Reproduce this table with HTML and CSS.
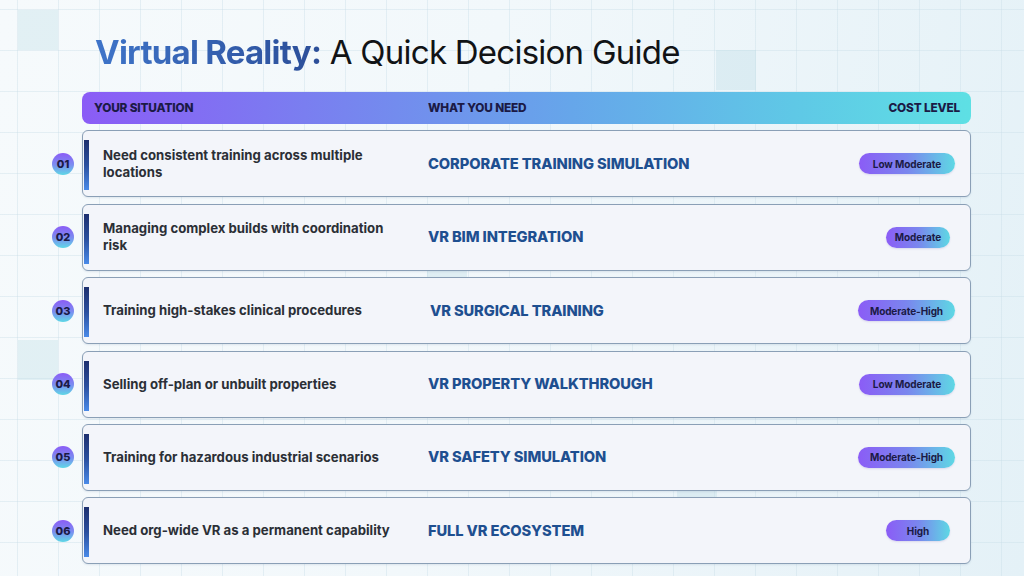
FILE: index.html
```html
<!DOCTYPE html>
<html lang="en">
<head>
<meta charset="utf-8">
<title>Virtual Reality: A Quick Decision Guide</title>
<link rel="stylesheet" href="styles.css">
</head>
<body>
<div class="page">
  <div class="deco d1"></div>
  <div class="deco d2"></div>
  <div class="deco d3"></div>
  <div class="deco d4"></div>
  <div class="deco d5"></div>

  <h1 class="title"><span class="accent">Virtual Reality:</span> A Quick Decision Guide</h1>

  <div class="table">
    <div class="head">
      <span class="h-sit">YOUR SITUATION</span>
      <span class="h-need">WHAT YOU NEED</span>
      <span class="h-cost">COST LEVEL</span>
    </div>

    <div class="line">
      <div class="num">01</div>
      <div class="card">
        <div class="bar"></div>
        <div class="sit">Need consistent training across multiple locations</div>
        <div class="need">CORPORATE TRAINING SIMULATION</div>
        <div class="cost"><span class="badge">Low Moderate</span></div>
      </div>
    </div>

    <div class="line">
      <div class="num">02</div>
      <div class="card">
        <div class="bar"></div>
        <div class="sit">Managing complex builds with coordination risk</div>
        <div class="need">VR BIM INTEGRATION</div>
        <div class="cost"><span class="badge narrow">Moderate</span></div>
      </div>
    </div>

    <div class="line">
      <div class="num">03</div>
      <div class="card">
        <div class="bar"></div>
        <div class="sit">Training high-stakes clinical procedures</div>
        <div class="need shift">VR SURGICAL TRAINING</div>
        <div class="cost"><span class="badge">Moderate-High</span></div>
      </div>
    </div>

    <div class="line">
      <div class="num">04</div>
      <div class="card">
        <div class="bar"></div>
        <div class="sit">Selling off-plan or unbuilt properties</div>
        <div class="need">VR PROPERTY WALKTHROUGH</div>
        <div class="cost"><span class="badge">Low Moderate</span></div>
      </div>
    </div>

    <div class="line">
      <div class="num">05</div>
      <div class="card">
        <div class="bar"></div>
        <div class="sit">Training for hazardous industrial scenarios</div>
        <div class="need">VR SAFETY SIMULATION</div>
        <div class="cost"><span class="badge">Moderate-High</span></div>
      </div>
    </div>

    <div class="line">
      <div class="num">06</div>
      <div class="card">
        <div class="bar"></div>
        <div class="sit">Need org-wide VR as a permanent capability</div>
        <div class="need">FULL VR ECOSYSTEM</div>
        <div class="cost"><span class="badge narrow">High</span></div>
      </div>
    </div>
  </div>
</div>
</body>
</html>
```

FILE: styles.css
```css
* { box-sizing: border-box; }

html, body {
  margin: 0;
  padding: 0;
}

body {
  width: 1024px;
  height: 576px;
  overflow: hidden;
  font-family: Inter, "Noto Sans", "Liberation Sans", sans-serif;
}

.page {
  position: relative;
  width: 1024px;
  height: 576px;
  overflow: hidden;
  background-color: #eef6fa;
  background-image:
    linear-gradient(to right, rgba(200, 222, 232, 0.4) 1px, transparent 1px),
    linear-gradient(to bottom, rgba(200, 222, 232, 0.4) 1px, transparent 1px),
    linear-gradient(100deg, #f6fafc 0%, #f2f8fb 45%, #e4f1f7 100%);
  background-size: 41px 41px, 41px 41px, 100% 100%;
  background-position: 17px 9px, 17px 9px, 0 0;
  padding-top: 31px;
}

.deco {
  position: absolute;
  width: 40px;
  height: 40px;
  background: rgba(190, 220, 230, 0.35);
}
.d1 { left: 18px; top: 10px; }
.d2 { left: 716px; top: 50px; }
.d3 { left: 18px; top: 340px; }
.d4 { left: 677px; top: 486px; }
.d5 { left: 427px; top: 256px; }

.title {
  position: relative;
  margin: 0 0 0 95px;
  font-size: 33px;
  line-height: 42px;
  font-weight: 400;
  color: #111316;
  letter-spacing: -0.75px;
}

.accent {
  font-weight: 700;
  letter-spacing: -0.75px;
  background: linear-gradient(90deg, #3e74c9 0%, #2c4e98 100%);
  -webkit-background-clip: text;
  background-clip: text;
  color: transparent;
}

.table {
  position: relative;
  margin: 19px 0 0 52px;
  width: 919px;
  display: flex;
  flex-direction: column;
  gap: 6.4px;
}

.head {
  margin-left: 30px;
  height: 32px;
  border-radius: 8px;
  background: linear-gradient(90deg, #8b5cf6 0%, #7a7ef0 25%, #66a6ea 55%, #5fc8e6 80%, #5ee0e4 100%);
  display: flex;
  align-items: center;
  font-size: 11.8px;
  font-weight: 800;
  color: #1b1a45;
  padding: 0 11px 0 12px;
  letter-spacing: -0.15px;
}
.h-sit { width: 334px; }
.h-need { flex: 1; }

.line {
  display: flex;
  align-items: center;
  gap: 8px;
  height: 67px;
}

.num {
  width: 22px;
  height: 22px;
  border-radius: 50%;
  background: linear-gradient(180deg, #8b5cf6 0%, #7b8ff0 55%, #5ed8e6 100%);
  color: #1b1a45;
  font-size: 11px;
  font-weight: 800;
  display: flex;
  align-items: center;
  justify-content: center;
  flex: none;
}

.card {
  flex: 1;
  height: 67px;
  background: #f3f5fa;
  border: 1px solid #8a9fb6;
  border-radius: 6px;
  display: flex;
  align-items: center;
  box-shadow: 0 1px 2px rgba(60, 90, 130, 0.12);
}

.bar {
  width: 5px;
  margin-left: 1px;
  height: 50px;
  align-self: flex-start;
  margin-top: 9px;
  background: linear-gradient(180deg, #1d2f6e 0%, #2a4f9e 50%, #4a8ae8 100%);
  flex: none;
}

.sit {
  width: 325px;
  margin-left: 14px;
  padding-right: 34px;
  font-size: 13.2px;
  line-height: 17px;
  font-weight: 700;
  color: #2b2f36;
}

.need {
  flex: 1;
  font-size: 14.7px;
  font-weight: 800;
  color: #1e4f90;
  letter-spacing: -0.1px;
}
.need.shift { padding-left: 2px; }

.cost {
  padding-right: 15px;
  display: flex;
  justify-content: flex-end;
}

.badge {
  height: 21px;
  border-radius: 11px;
  padding: 0 12px;
  min-width: 96px;
  display: inline-flex;
  align-items: center;
  justify-content: center;
  background: linear-gradient(90deg, #8b5cf6 0%, #7a86ee 50%, #5ed8e4 100%);
  color: #1b1a45;
  font-size: 10px;
  font-weight: 700;
  letter-spacing: -0.1px;
  box-shadow: 0 1px 2px rgba(80, 60, 160, 0.15);
}
.badge.narrow {
  min-width: 64px;
  padding: 0 9px;
  margin-right: 5px;
}
```
